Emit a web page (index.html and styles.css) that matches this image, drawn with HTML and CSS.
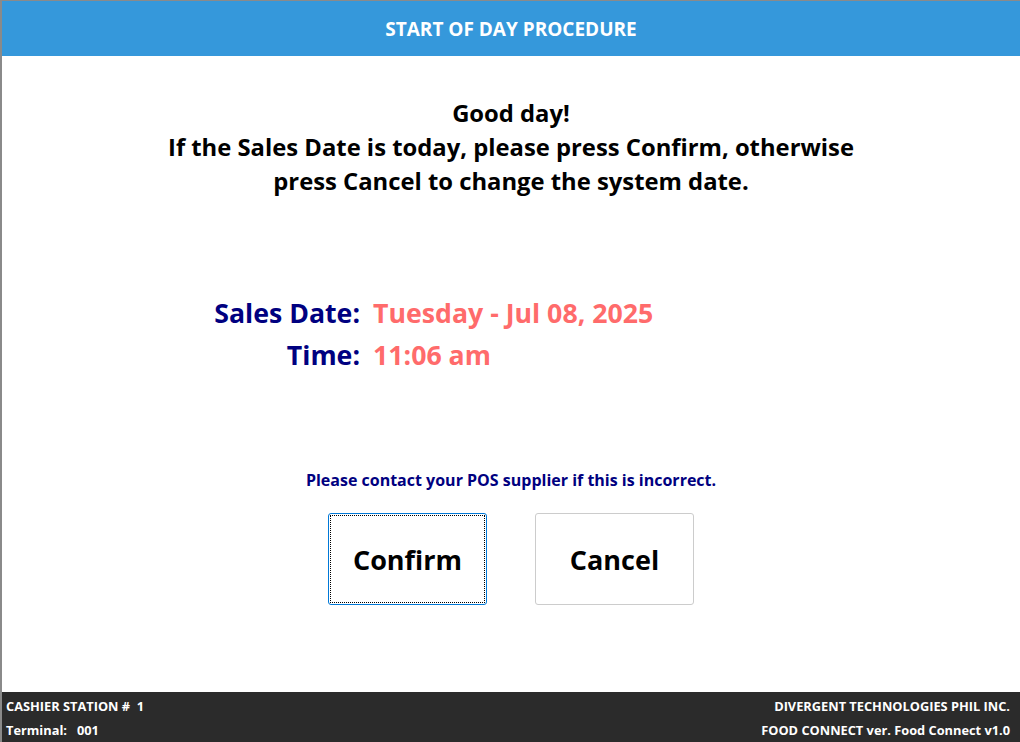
FILE: index.html
```html
<!DOCTYPE html>
<html>
<head>
<meta charset="utf-8">
<link rel="stylesheet" href="styles.css">
</head>
<body>
<div class="frame">
  <header class="topbar">START OF DAY PROCEDURE</header>
  <main class="content">
    <div class="greeting">
      <div>Good day!</div>
      <div>If the Sales Date is today, please press Confirm, otherwise</div>
      <div>press Cancel to change the system date.</div>
    </div>
    <div class="info">
      <div class="row"><span class="label">Sales Date:</span><span class="value">Tuesday - Jul 08, 2025</span></div>
      <div class="row"><span class="label">Time:</span><span class="value">11:06 am</span></div>
    </div>
    <div class="notice">Please contact your POS supplier if this is incorrect.</div>
    <div class="actions">
      <button class="btn btn-focus"><span class="focus-ring"></span>Confirm</button>
      <button class="btn">Cancel</button>
    </div>
  </main>
  <footer class="bottombar">
    <div class="foot-left">
      <div>CASHIER STATION #&nbsp;&nbsp;1</div>
      <div>Terminal:&nbsp;&nbsp;&nbsp;001</div>
    </div>
    <div class="foot-right">
      <div>DIVERGENT TECHNOLOGIES PHIL INC.</div>
      <div>FOOD CONNECT ver. Food Connect v1.0</div>
    </div>
  </footer>
</div>
</body>
</html>
```
FILE: styles.css
```css
html, body {
  margin: 0;
  padding: 0;
  width: 1020px;
  height: 742px;
  overflow: hidden;
  background: #ffffff;
  font-family: "Open Sans", "Noto Sans", sans-serif;
  font-weight: 700;
}
.frame {
  box-sizing: border-box;
  width: 1020px;
  height: 742px;
  border-top: 1px solid #8a8a8a;
  border-left: 2px solid #8a8a8a;
  display: flex;
  flex-direction: column;
}
.topbar {
  height: 55px;
  flex: none;
  background: #3598db;
  color: #ffffff;
  font-size: 19px;
  display: flex;
  align-items: center;
  justify-content: center;
}
.content {
  flex: 1;
  display: flex;
  flex-direction: column;
  align-items: center;
}
.greeting {
  margin-top: 40px;
  text-align: center;
  font-size: 23.8px;
  line-height: 34px;
  color: #000000;
}
.info {
  margin-top: 94px;
  align-self: stretch;
  padding-left: 188px;
  display: flex;
  flex-direction: column;
}
.row {
  display: flex;
  align-items: baseline;
  gap: 13px;
  height: 42px;
  line-height: 42px;
  font-size: 26.7px;
}
.label {
  width: 170px;
  text-align: right;
  color: #000080;
}
.value {
  color: #ff6b6b;
}
.notice {
  margin-top: 93px;
  color: #000080;
  font-size: 16px;
  line-height: 22px;
}
.actions {
  margin-top: 22px;
  display: flex;
  gap: 48px;
}
.btn {
  position: relative;
  width: 159px;
  height: 92px;
  border: 1px solid #cccccc;
  border-radius: 3px;
  background: #ffffff;
  font-family: "Open Sans", "Noto Sans", sans-serif;
  font-weight: 700;
  font-size: 27px;
  color: #000000;
  padding: 0;
}
.btn-focus {
  border-color: #0078d7;
}
.focus-ring {
  position: absolute;
  inset: 1px;
  border: 1px dotted #000000;
}
.bottombar {
  box-sizing: border-box;
  height: 50px;
  flex: none;
  background: #2b2b2b;
  color: #ffffff;
  font-size: 12.8px;
  display: flex;
  justify-content: space-between;
  padding: 2px 10px 0 4px;
}
.foot-left, .foot-right {
  display: flex;
  flex-direction: column;
  line-height: 24px;
}
.foot-right {
  align-items: flex-end;
}
```
